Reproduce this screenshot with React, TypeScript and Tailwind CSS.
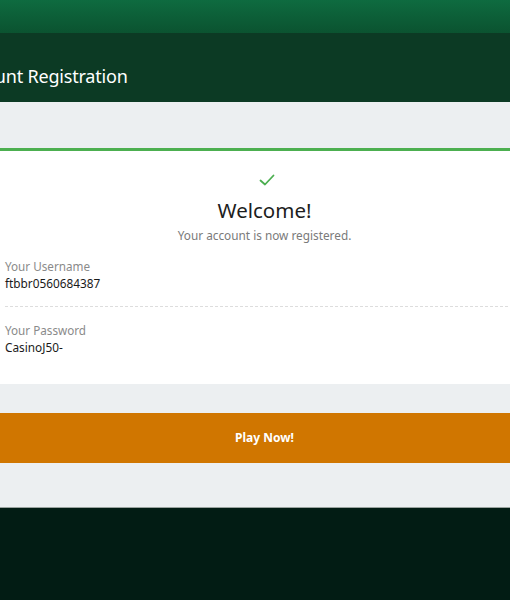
import React from 'react';

const Field: React.FC<{ label: string; value: string; divider?: boolean; top: string }> = ({ label, value, divider, top }) => (
    <div className={`${top} pb-[14px] ${divider ? 'border-b border-dashed border-[#dddddd]' : ''}`}>
        <div className="text-[11.7px] leading-[17px] text-[#8a8a8a]">{label}</div>
        <div className="text-[11.8px] leading-[17px] text-[#1a1a1a]">{value}</div>
    </div>
);

const App: React.FC = () => {
    return (
        <div className="w-[510px] h-[600px] overflow-hidden bg-[#021c14] font-['Noto_Sans','Open_Sans',sans-serif]">
            {/* top gradient strip */}
            <div className="h-[33px] bg-gradient-to-b from-[#0e6b40] to-[#0b5330]" />

            {/* page title bar */}
            <div className="h-[69px] bg-[#0c3a24] flex items-center pt-[18px]">
                <h1 className="-ml-[44px] text-[18px] text-white tracking-[-0.2px]">Account Registration</h1>
            </div>

            <div className="bg-[#eceff1] pt-[46px] pb-[44px] border-b border-[#9aa39f]">
                {/* success card */}
                <div className="w-[548px] -ml-[20px] bg-white border-t-[3px] border-[#4caf50]">
                    <div className="flex flex-col items-center pl-[21px] pt-[23px]">
                        <svg width="16" height="12" viewBox="0 0 16 12" fill="none" className="ml-[4px]">
                            <path d="M1.5 6.5 L6 10.5 L14.5 1.5" stroke="#4caf50" strokeWidth="1.8" strokeLinecap="round" strokeLinejoin="round" />
                        </svg>
                        <div className="mt-[10px] text-[20.5px] leading-[28px] text-[#1d1d1d]">Welcome!</div>
                        <div className="mt-[3px] text-[11.8px] leading-[17px] text-[#7a7a7a]">Your account is now registered.</div>
                    </div>
                    <div className="pl-[25px] pt-[6px] pb-[14px]">
                        <Field label="Your Username" value="ftbbr0560684387" divider top="pt-[8px]" />
                        <Field label="Your Password" value="CasinoJ50-" top="pt-[15px]" />
                    </div>
                </div>

                {/* play button */}
                <div className="w-[548px] -ml-[20px] mt-[29px] h-[50px] bg-[#d07600] flex items-center justify-center pl-[21px]">
                    <span className="text-[12px] font-bold text-white">Play Now!</span>
                </div>
            </div>
        </div>
    );
};

export default App;
